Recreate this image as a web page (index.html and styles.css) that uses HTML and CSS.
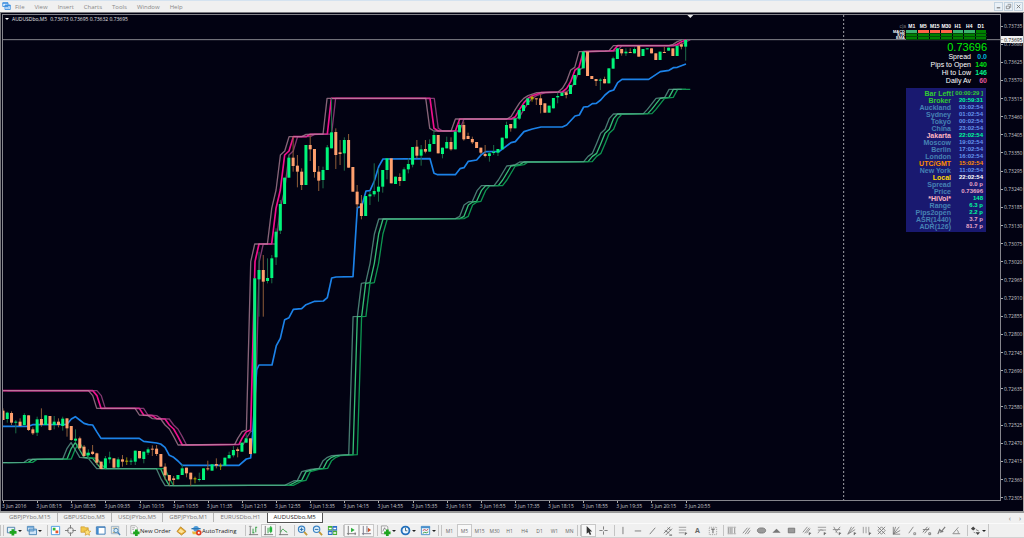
FILE: index.html
```html
<!DOCTYPE html>
<html lang="en">
<head>
<meta charset="utf-8">
<title>AUDUSDbo,M5</title>
<link rel="stylesheet" href="styles.css">
</head>
<body>
<svg class="symbols" aria-hidden="true">
  <symbol id="app" viewBox="0 0 12 12"><path d="M1 1h7v5H1zM4 4h7v6H4z" fill="#e8f4ff" stroke="#3c8fe0" stroke-width="1.2"/><path d="M4 4.7h7M1 1.5h7" stroke="#3c8fe0" stroke-width="1.6"/><path d="M5.5 8h4" stroke="#3c8fe0"/></symbol>
  <symbol id="newchart" viewBox="0 0 12 12"><path d="M1.500 2.500h8v6h-8z" fill="#e4f1fb" stroke="#4b7fa8"/><path d="M7.500 4.500v7M4 8h7.500" stroke="#1ea51e" stroke-width="3"/></symbol>
  <symbol id="profiles" viewBox="0 0 12 12"><path d="M1.500 1.500h7v5h-7zM3.500 4.500h8v6h-8z" fill="#cfe4f6" stroke="#4682b4"/><path d="M2 2.500h6M4 5.500h7" stroke="#5f9fd4"/></symbol>
  <symbol id="market" viewBox="0 0 12 12"><path d="M1.500 1.500h9v9h-9z" fill="#fff" stroke="#4a9be0"/><path d="M3 3h3v3H3z" fill="#38b538"/><path d="M6 6h3v3H6z" fill="#e4572e"/></symbol>
  <symbol id="target" viewBox="0 0 12 12"><circle cx="6" cy="6" r="3.200" fill="none" stroke="#777"/><path d="M6 0v4M6 8v4M0 6h4M8 6h4" stroke="#777"/></symbol>
  <symbol id="folder" viewBox="0 0 12 12"><path d="M1 2h4l1 1h3v5H1z" fill="#f2c84b" stroke="#c9962a" stroke-width=".7"/><path d="M8 4l1.200 2.500 2.600.3-2 1.800.6 2.600L8 10l-2.400 1.200.6-2.600-2-1.800 2.600-.3z" fill="#ffe27a" stroke="#c9962a" stroke-width=".7"/></symbol>
  <symbol id="navigator" viewBox="0 0 12 12"><path d="M1.500 2h9.500v8H1.500z" fill="#fff" stroke="#3676b5"/><path d="M2 2.500h9" stroke="#3676b5"/><path d="M2 3h2v7H2z" fill="#3f8bd0"/></symbol>
  <symbol id="tester" viewBox="0 0 12 12"><path d="M1.500 1.500h8v8h-8z" fill="#e9f0f6" stroke="#9ab0c2"/><path d="M3 3.500h5M3 8h3" stroke="#b79a55"/><circle cx="6.500" cy="6" r="2.300" fill="#d5ecfb" stroke="#4b87ba"/><path d="M8.300 8l2.700 3" stroke="#4b87ba" stroke-width="1.500"/></symbol>
  <symbol id="order" viewBox="0 0 12 12"><path d="M2 .8h5l2 2v6.700H2z" fill="#fafafa" stroke="#999" stroke-width=".8"/><path d="M3.500 3h3M3.500 5h2" stroke="#888" stroke-width=".7"/><path d="M8 5v7M4.500 8.500h7" stroke="#1ea51e" stroke-width="3"/></symbol>
  <symbol id="editor" viewBox="0 0 12 12"><path d="M1 7l4-5 6 5-5 4z" fill="#e5ad35" stroke="#b57b1c" stroke-width=".8"/><path d="M2.500 7L5 4l4 3-3 2z" fill="#ffe39a"/></symbol>
  <symbol id="auto" viewBox="0 0 12 12"><path d="M1 7h8l1 3H2z" fill="#e8b93e"/><circle cx="5.500" cy="4" r="3" fill="#4c9bd9"/><path d="M.5 4h10" stroke="#2c77b4" stroke-width="1.500"/><circle cx="8.500" cy="8.500" r="3" fill="#e03c22"/><path d="M7.500 7.500h2v2h-2z" fill="#fff"/></symbol>
  <symbol id="bars" viewBox="0 0 12 12"><path d="M2.500 1v10M1 10.500h10" stroke="#777"/><path d="M1 1.500h3" stroke="#999"/><path d="M5.500 4v5M8.500 2v6M5 8.500h2M8.500 2.500H10" stroke="#2c9c3c"/></symbol>
  <symbol id="candles" viewBox="0 0 12 12"><path d="M2.500 1v10M1 10.500h10" stroke="#777"/><path d="M5.500 3v6M8.500 1v8" stroke="#2c9c3c"/><path d="M7 2.500h3v5H7z" fill="#22b53a"/></symbol>
  <symbol id="line" viewBox="0 0 12 12"><path d="M2.500 1v10M1 10.500h10" stroke="#777"/><path d="M3 8c1-4 3-4 4-2l3 2" fill="none" stroke="#2c9c3c"/></symbol>
  <symbol id="zoomin" viewBox="0 0 12 12"><circle cx="5" cy="4.700" r="3.500" fill="#dceffc" stroke="#3b83c4" stroke-width="1.200"/><path d="M5 2.800v4M3 4.800h4" stroke="#2468a6"/><path d="M7.800 7.500L11 11" stroke="#c59a39" stroke-width="2"/></symbol>
  <symbol id="zoomout" viewBox="0 0 12 12"><circle cx="5" cy="4.700" r="3.500" fill="#dceffc" stroke="#3b83c4" stroke-width="1.200"/><path d="M3 4.800h4" stroke="#2468a6"/><path d="M7.800 7.500L11 11" stroke="#c59a39" stroke-width="2"/></symbol>
  <symbol id="tile" viewBox="0 0 12 12"><path d="M1 1h5v5H1zM6 6h5v5H6z" fill="#45ad35"/><path d="M6 1h5v5H6zM1 6h5v5H1z" fill="#2d6fc9"/><path d="M2 3h3v1.500H2zM7 3h3v1.500H7zM2 8h3v1.500H2zM7 8h3v1.500H7z" fill="#fff"/></symbol>
  <symbol id="scroll" viewBox="0 0 12 12"><path d="M2.500 1v10M1 9.500h10M10 8v3" stroke="#777"/><path d="M5.500 3v5l4-2.500z" fill="#28ad38"/></symbol>
  <symbol id="shift" viewBox="0 0 12 12"><path d="M2.500 1v10M1 9.500h10M6.500 1v7" stroke="#778"/><path d="M7.500 3v5l3.500-2.500z" fill="#c7502b"/></symbol>
  <symbol id="indicators" viewBox="0 0 12 12"><path d="M1.500 1h6l1 1v7.500h-7z" fill="#f6f6f6" stroke="#888" stroke-width=".8"/><path d="M3 7l2-4 1 2" fill="none" stroke="#666" stroke-width=".8"/><path d="M8 5v7M4.500 8.500h7" stroke="#1ea51e" stroke-width="3"/></symbol>
  <symbol id="clock" viewBox="0 0 12 12"><circle cx="6" cy="6" r="4.300" fill="#eef7ff" stroke="#2471bd" stroke-width="2"/><path d="M6 3v3.300h2" fill="none" stroke="#356" stroke-width=".9"/></symbol>
  <symbol id="template" viewBox="0 0 12 12"><path d="M1.500 1.500h9v9h-9z" fill="#edf6ff" stroke="#4a8fcb"/><path d="M1 2.500h10" stroke="#4a8fcb" stroke-width="2"/><path d="M3 6l2-1 2 1 2-1.500" fill="none" stroke="#b44"/><path d="M3 9l2-1 2 .500 2-1" fill="none" stroke="#393"/></symbol>
  <symbol id="cursor" viewBox="0 0 12 12"><path d="M4 1v8.500l2-1.700 1.500 3 1.500-.8L7.500 7H10z" fill="#333"/></symbol>
  <symbol id="cross" viewBox="0 0 12 12"><path d="M6 1.500v3.500M6 7v3.500M1.500 6H5M7 6h3.500" stroke="#777"/></symbol>
  <symbol id="vline" viewBox="0 0 12 12"><path d="M6.500 2v8" stroke="#777"/></symbol>
  <symbol id="hline" viewBox="0 0 12 12"><path d="M3 6.500h7" stroke="#777"/></symbol>
  <symbol id="trend" viewBox="0 0 12 12"><path d="M3 10l6-7" stroke="#777"/></symbol>
  <symbol id="channel" viewBox="0 0 12 12"><path d="M2 9l7-7M4 11l7-7M3 6l5 3M6 3l4 3" stroke="#777"/><path d="M8 11h3" stroke="#444"/></symbol>
  <symbol id="fibo" viewBox="0 0 12 12"><path d="M2 2.500h8M2 5.500h8M2 8.500h6" stroke="#999"/><path d="M9 8v3M9 9h2" stroke="#555"/></symbol>
  <symbol id="label" viewBox="0 0 12 12"><path d="M2.500 2.500h8v8h-8z" fill="none" stroke="#999" stroke-dasharray="1 1"/><path d="M4.500 4.500h4M6.500 4.500V9" stroke="#555"/></symbol>
  <symbol id="cycle" viewBox="0 0 12 12"><path d="M2.500 2v8M4.500 2v8M6.500 2v8M9.500 2v8" stroke="#888"/><path d="M2 2.500h9M2 9.500h9" stroke="#bbb"/></symbol>
  <symbol id="hatch" viewBox="0 0 12 12"><path d="M2 9l5-6M4.500 10l5-7M7 10l3-4" stroke="#888"/></symbol>
  <symbol id="ellipse" viewBox="0 0 12 12"><ellipse cx="6" cy="6" rx="4.500" ry="2.800" fill="#999" stroke="#777"/></symbol>
  <symbol id="triangle" viewBox="0 0 12 12"><path d="M1.500 8.500L6 4l4.500 4.500z" fill="#777"/></symbol>
  <symbol id="rect" viewBox="0 0 12 12"><path d="M2.500 3.500h7v5h-7z" fill="#999" stroke="#777"/></symbol>
  <symbol id="hatch2" viewBox="0 0 12 12"><path d="M2 8l5-6M4 9l5-6M6 9l4-5" stroke="#888"/><path d="M9 8v3M9 9h2" stroke="#555"/></symbol>
  <symbol id="range" viewBox="0 0 12 12"><path d="M2 2.500h9M2 5.500h9M2 9l3-4 3 1" fill="none" stroke="#999"/><path d="M9 8v3M9 9h2" stroke="#555"/></symbol>
  <symbol id="fork" viewBox="0 0 12 12"><path d="M2 5h8M3 2l4 7M10 2L5 8" stroke="#888"/><path d="M9 8v3M9 9h2" stroke="#555"/></symbol>
  <symbol id="fan" viewBox="0 0 12 12"><path d="M2 10l7-8M2 10l8-5M2 10l4-8" stroke="#888"/><path d="M9 8v3M9 9h2" stroke="#555"/></symbol>
  <symbol id="zones" viewBox="0 0 12 12"><path d="M2.500 2v7M5.500 2v7M8.500 2v6" stroke="#999"/><path d="M9 8v3M9 9h2" stroke="#555"/></symbol>
  <symbol id="grid" viewBox="0 0 12 12"><path d="M2 2l8 8M2 6l4 4M6 2l4 4M10 2l-8 8M6 2L2 6M10 6l-4 4" fill="none" stroke="#777" stroke-width=".9"/></symbol>
  <symbol id="rays" viewBox="0 0 12 12"><path d="M2.500 2v8H10M2.500 10L5 2M2.500 10L9 2M2.500 10L10 6" fill="none" stroke="#777" stroke-width=".9"/></symbol>
  <symbol id="stroke" viewBox="0 0 12 12"><path d="M3 9l5-7M8.500 8.500h2v2h-2z" fill="none" stroke="#888"/></symbol>
  <symbol id="multi" viewBox="0 0 12 12"><path d="M2 8l5-6M4 9l5-6M2 5h7M8.500 8.500h2v2h-2z" fill="none" stroke="#777"/></symbol>
  <symbol id="wave" viewBox="0 0 12 12"><path d="M2 10l2-5 2 2 4-5M4 8l4-1" fill="none" stroke="#777" stroke-width="1.200"/></symbol>
  <symbol id="angle" viewBox="0 0 12 12"><path d="M2 9.500l6-7M2 9.500h8M6 5c2 1 2 3 2 4" fill="none" stroke="#888"/></symbol>
  <symbol id="arrows" viewBox="0 0 12 12"><path d="M1 4l2.500-2.500L6 4 3.500 6zM6 8h5l-2.500 3z" fill="#444"/><path d="M4 7.500l1.500 1.500M6.500 5l3 1.500" stroke="#777"/></symbol>
</svg>

<header class="menubar">
  <svg class="app-icon"><use href="#app"/></svg>
  <nav class="menus">
    <button>File</button><button>View</button><button>Insert</button><button>Charts</button><button>Tools</button><button>Window</button><button>Help</button>
  </nav>
  <div class="window-buttons">
    <button aria-label="Minimize"><svg viewBox="0 0 8 8"><path d="M2 5.500h4" stroke="#555"/></svg></button>
    <button aria-label="Restore"><svg viewBox="0 0 8 8"><path d="M3 1.500h3.500V5H5M1.500 3.500H5v3H1.500z" fill="none" stroke="#777" stroke-width=".8"/></svg></button>
    <button aria-label="Close"><svg viewBox="0 0 8 8"><path d="M2 2l4 4M6 2L2 6" stroke="#777"/></svg></button>
  </div>
</header>

<main class="chart">
  <section class="plot">
    <svg class="series" id="series" viewBox="9 45 2991 1455" preserveAspectRatio="none" role="img" aria-label="AUDUSD five minute candles"></svg>
    <h1 class="chart-title"><span class="caret"></span><span>AUDUSDbo,M5</span><span>0.73673 0.73695 0.73632 0.73695</span></h1>
    <aside class="panel">
      <table class="signals">
        <tr class="heads"><th class="dim">c|a</th><th>M1</th><th>M5</th><th>M15</th><th>M30</th><th>H1</th><th>H4</th><th>D1</th></tr>
        <tr><th>MACD</th><td class="sea"></td><td class="red"></td><td class="red"></td><td class="red"></td><td class="sea"></td><td class="sea"></td><td></td></tr>
        <tr><th>STR</th><td></td><td></td><td></td><td></td><td></td><td></td><td></td></tr>
        <tr><th>EMA</th><td></td><td></td><td></td><td></td><td></td><td></td><td></td></tr>
      </table>
      <div class="bid">0.73696</div>
      <table class="stats">
        <tr><th>Spread</th><td class="aqua">0.0</td></tr>
        <tr><th>Pips to Open</th><td class="lime">140</td></tr>
        <tr><th>Hi to Low</th><td class="spring">146</td></tr>
        <tr><th>Daily Av</th><td class="rose">60</td></tr>
      </table>
      <table class="clocks">
        <tr class="limegreen"><th>Bar Left</th><td>[ 00:00:29 ]</td></tr>
        <tr class="broker"><th>Broker</th><td>20:59:31</td></tr>
        <tr><th>Auckland</th><td>03:02:54</td></tr>
        <tr><th>Sydney</th><td>01:02:54</td></tr>
        <tr><th>Tokyo</th><td>00:02:54</td></tr>
        <tr><th>China</th><td>23:02:54</td></tr>
        <tr class="jakarta"><th>Jakarta</th><td>22:02:54</td></tr>
        <tr><th>Moscow</th><td>19:02:54</td></tr>
        <tr><th>Berlin</th><td>17:02:54</td></tr>
        <tr><th>London</th><td>16:02:54</td></tr>
        <tr class="utc"><th>UTC/GMT</th><td>15:02:54</td></tr>
        <tr><th>New York</th><td>11:02:54</td></tr>
        <tr class="local"><th>Local</th><td>22:02:54</td></tr>
        <tr class="pink"><th>Spread</th><td>0.0 p</td></tr>
        <tr class="pink"><th>Price</th><td>0.73696</td></tr>
        <tr class="jakarta"><th>*HiVol*</th><td>148</td></tr>
        <tr class="mint"><th>Range</th><td>6.3 p</td></tr>
        <tr class="mint"><th>Pips2open</th><td>2.2 p</td></tr>
        <tr class="pink"><th>ASR(1440)</th><td>3.7 p</td></tr>
        <tr class="pink"><th>ADR(126)</th><td>81.7 p</td></tr>
      </table>
    </aside>
  </section>
  <div class="price-axis" id="prices"><span class="current">0.73695</span></div>
  <div class="time-axis" id="times"></div>
</main>

<nav class="tabs">
  <button>GBPJPYbo,M15</button><button>GBPUSDbo,M5</button><button>USDJPYbo,M5</button><button>GBPJPYbo,M1</button><button>EURUSDbo,H1</button><button class="active">AUDUSDbo,M5</button>
  <span class="tab-scroll"><button aria-label="Scroll left">‹</button><button aria-label="Scroll right">›</button></span>
</nav>

<footer class="toolbar">
  <i class="grip"></i>
  <button class="drop" aria-label="New chart"><svg><use href="#newchart"/></svg></button>
  <button class="drop" aria-label="Profiles"><svg><use href="#profiles"/></svg></button>
  <i class="sep"></i>
  <button aria-label="Market watch"><svg><use href="#market"/></svg></button>
  <button aria-label="Data window"><svg><use href="#target"/></svg></button>
  <button aria-label="Favorites"><svg><use href="#folder"/></svg></button>
  <button aria-label="Navigator"><svg><use href="#navigator"/></svg></button>
  <button aria-label="Strategy tester"><svg><use href="#tester"/></svg></button>
  <i class="sep"></i>
  <button class="wide order"><svg><use href="#order"/></svg>New Order</button>
  <button aria-label="MetaEditor"><svg><use href="#editor"/></svg></button>
  <button class="wide auto"><svg><use href="#auto"/></svg>AutoTrading</button>
  <i class="sep"></i>
  <button aria-label="Bar chart"><svg><use href="#bars"/></svg></button>
  <button class="on" aria-label="Candlesticks"><svg><use href="#candles"/></svg></button>
  <button aria-label="Line chart"><svg><use href="#line"/></svg></button>
  <i class="sep"></i>
  <button aria-label="Zoom in"><svg><use href="#zoomin"/></svg></button>
  <button aria-label="Zoom out"><svg><use href="#zoomout"/></svg></button>
  <button aria-label="Tile windows"><svg><use href="#tile"/></svg></button>
  <i class="sep"></i>
  <button class="on" aria-label="Auto scroll"><svg><use href="#scroll"/></svg></button>
  <button class="on" aria-label="Chart shift"><svg><use href="#shift"/></svg></button>
  <i class="sep"></i>
  <button class="drop" aria-label="Indicators"><svg><use href="#indicators"/></svg></button>
  <button class="drop" aria-label="Periods"><svg><use href="#clock"/></svg></button>
  <button class="drop" aria-label="Templates"><svg><use href="#template"/></svg></button>
  <i class="grip"></i>
  <button>M1</button><button class="on">M5</button><button>M15</button><button>M30</button><button>H1</button><button>H4</button><button>D1</button><button>W1</button><button>MN</button>
  <i class="grip"></i>
  <button class="on" aria-label="Cursor"><svg><use href="#cursor"/></svg></button>
  <button aria-label="Crosshair"><svg><use href="#cross"/></svg></button>
  <i class="sep"></i>
  <button aria-label="Vertical line"><svg><use href="#vline"/></svg></button>
  <button aria-label="Horizontal line"><svg><use href="#hline"/></svg></button>
  <button aria-label="Trendline"><svg><use href="#trend"/></svg></button>
  <button aria-label="Channel"><svg><use href="#channel"/></svg></button>
  <button aria-label="Fibonacci"><svg><use href="#fibo"/></svg></button>
  <button class="letter">A</button>
  <button aria-label="Text label"><svg><use href="#label"/></svg></button>
  <i class="sep"></i>
  <button aria-label="Cycle lines"><svg><use href="#cycle"/></svg></button>
  <button aria-label="Parallel lines"><svg><use href="#hatch"/></svg></button>
  <button aria-label="Ellipse"><svg><use href="#ellipse"/></svg></button>
  <button aria-label="Triangle"><svg><use href="#triangle"/></svg></button>
  <button aria-label="Rectangle"><svg><use href="#rect"/></svg></button>
  <button aria-label="Fibonacci channel"><svg><use href="#hatch2"/></svg></button>
  <button aria-label="Expansion"><svg><use href="#range"/></svg></button>
  <button aria-label="Pitchfork"><svg><use href="#fork"/></svg></button>
  <button aria-label="Fibonacci fan"><svg><use href="#fan"/></svg></button>
  <button aria-label="Time zones"><svg><use href="#zones"/></svg></button>
  <button aria-label="Gann grid"><svg><use href="#grid"/></svg></button>
  <button aria-label="Gann fan"><svg><use href="#rays"/></svg></button>
  <button aria-label="Gann line"><svg><use href="#stroke"/></svg></button>
  <button aria-label="Regression channel"><svg><use href="#multi"/></svg></button>
  <button aria-label="Waves"><svg><use href="#wave"/></svg></button>
  <button aria-label="Trend by angle"><svg><use href="#angle"/></svg></button>
  <i class="sep"></i>
  <button class="drop" aria-label="Arrows"><svg><use href="#arrows"/></svg></button>
  <i class="end"></i>
</footer>
<script src="chart.js"></script>
</body>
</html>
```

FILE: styles.css
```css
* { box-sizing: border-box; }
body {
  margin: 0;
  height: 100vh;
  display: flex;
  flex-direction: column;
  background: #f0f0f0;
  color: #777;
  font-family: "Open Sans", "Noto Sans", sans-serif;
  font-size: 6px;
  overflow: hidden;
}
button {
  margin: 0;
  padding: 0;
  border: 0;
  background: none;
  color: inherit;
  font: inherit;
  white-space: nowrap;
}
table { border-collapse: collapse; }
th, td { padding: 0; }
.symbols { display: none; }

.menubar {
  flex: none;
  height: 13px;
  display: flex;
  align-items: center;
  padding: 0 1px 0 2px;
  border-top: 1px solid #d5e3f0;
  border-bottom: 1px solid #77777c;
}
.app-icon { width: 9px; height: 9px; }
.menus { flex: 1; display: flex; gap: 10px; padding-left: 4px; font-size: 6px; line-height: 10px; color: #888; }
.window-buttons { display: flex; gap: 1px; }
.window-buttons button { width: 9px; height: 9px; border: 1px solid #c3d3e0; background: #eaf1f7; display: flex; }
.window-buttons svg { width: 100%; height: 100%; }

.chart {
  flex: 1;
  min-height: 0;
  display: grid;
  grid-template-columns: 1fr 22px;
  grid-template-rows: 1fr 10px;
  padding: 1px 0 0 1px;
  background: #020212;
  border-left: 1px solid #77777c;
  border-right: 1px solid #aaa;
  color: #c8c8cc;
  font-size: 5px;
}
.plot { position: relative; min-height: 0; border: 1px solid #85858c; display: flex; justify-content: space-between; }
.series { position: absolute; left: 0; top: 0; width: 100%; height: 100%; }
.chart-title { position: relative; margin: 0; padding: 0 2px; display: flex; gap: 3px; height: 8px; align-items: center; font-size: 5px; font-weight: 400; color: #e4e4e8; }
.caret { border: 2px solid transparent; border-top-color: #fff; border-bottom: 0; }

.panel { position: relative; padding: 8px 13px 0 0; display: flex; flex-direction: column; align-items: flex-end; font-family: "Liberation Sans", Arial, sans-serif; }
.signals { table-layout: fixed; width: 95px; line-height: 3px; color: #fff; }
.signals th { font-size: 4px; text-align: right; height: 3px; padding-right: 1px; }
.signals .heads th { height: 7px; font-size: 5px; text-align: center; padding: 0; }
.signals .heads .dim { color: #777; font-weight: 400; text-align: right; }
.signals th:first-child { width: 14px; }
.signals td { height: 3px; background: #008000; border-right: 1px solid #020212; border-bottom: 1px solid #024a08; }
.signals td.sea { background: #3cb371; }
.signals td.red { background: #ff6347; }
.bid { font-size: 11px; line-height: 12px; color: #00f000; padding-top: 1px; }
.stats { font-size: 7px; line-height: 8px; color: #fff; text-align: right; }
.stats th { font-weight: 400; }
.stats td { width: 16px; font-weight: 700; }
.aqua { color: #00b4dc; }
.lime { color: #00e010; }
.spring { color: #00f08a; }
.rose { color: #e0589c; }
.clocks { margin: 3px 1px 0 0; width: 80px; border: 2px solid #191970; border-width: 2px 0; background: #191970; font-size: 7px; line-height: 7px; font-weight: 700; text-align: right; color: #4682b4; }
.clocks th { width: 45px; height: 7px; }
.clocks td { padding-right: 3px; font-size: 6px; color: #6495ed; white-space: nowrap; }
.clocks .limegreen, .clocks .limegreen td, .clocks .broker { color: #32cd32; }
.clocks .broker td, .clocks .jakarta td, .clocks .mint td { color: #00fa9a; }
.clocks .jakarta { color: #ffb6c1; }
.clocks .utc, .clocks .utc td { color: #ff8c00; }
.clocks .local { color: #ffd700; }
.clocks .local td { color: #fff; }
.clocks .pink td { color: #e8a5c4; }

.price-axis { position: relative; grid-row: span 2; display: flex; flex-direction: column; justify-content: space-between; padding: 9px 0 10px; line-height: 6px; }
.price-axis span { display: flex; align-items: center; }
.price-axis span::before { content: ""; width: 2px; height: 1px; margin-right: 1px; background: #aaa; }
.price-axis .current { position: absolute; left: 0; right: 0; top: 22px; height: 7px; z-index: 1; background: #f0f0f0; color: #111; }
.time-axis { display: grid; grid-template-columns: repeat(21, 100fr) 827fr; line-height: 6px; }
.time-axis span { min-width: 0; white-space: nowrap; }
.time-axis span::before { content: ""; display: block; width: 1px; height: 2px; margin-left: 1px; background: #aaa; }

.tabs { flex: none; height: 12px; display: flex; padding: 0 3px; border-top: 2px solid #9a9a9a; line-height: 9px; }
.tabs > button { padding: 0 6px; border-right: 1px solid #b5b5b5; height: 9px; }
.tabs > button:nth-child(5) { border-right: 0; }
.tabs .active { background: #fff; border: 1px solid #555; border-top: 0; color: #222; height: 10px; }
.tab-scroll { margin-left: auto; display: flex; gap: 8px; font-size: 7px; }

.toolbar { flex: none; height: 15px; display: flex; align-items: center; border-top: 1px solid #fafafa; border-bottom: 1px solid #d2d2d2; color: #666; font-size: 5px; }
.toolbar button { flex: none; width: 15px; height: 13px; display: flex; align-items: center; justify-content: center; }
.toolbar svg { flex: none; width: 11px; height: 11px; }
.toolbar .on { background: #f8f8f8; border: 1px solid #c8c8c8; }
.toolbar .drop { width: 20px; justify-content: flex-start; padding-left: 2px; gap: 1px; }
.toolbar .drop::after { content: ""; border: 2px solid transparent; border-top-color: #222; border-bottom: 0; }
.toolbar .wide { justify-content: flex-start; padding-left: 2px; font-size: 6px; color: #222; }
.toolbar .order { width: 47px; }
.toolbar .auto { width: 53px; }
.toolbar .letter { font-size: 7px; font-weight: 700; }
.grip, .sep { flex: none; width: 4px; height: 11px; border-right: 1px solid #c4c4c4; }
.grip { border-left: 1px solid #c4c4c4; }
.end { height: 13px; border-right: 1px solid #c4c4c4; }
```

FILE: chart.js
```js
// Chart units: three per nominal pixel. One candle every STEP units.
const STEP = 12.8;
const FIRST = 9;

// Each block: vertical base, then candles as "kind top bottom [high low]".
// u = rising, d = falling, y = unchanged.
const blocks = [
  [1110, `d 122 150 115 150|u 128 147 125 158|d 129 158 124 165|u 155 158 150 190|d 155 168 145 168|u 135 165 130 168|d 136 180 136 183|d 178 190 172 195|u 148 188 140 198|d 147 165 115 170|u 136 165|d 138 180 138 182|u 155 165 138 178|d 155 165 145 172|u 146 168 140 182|d 145 175 145 200|d 168 210 168 212|u 206 212 178 218|d 205 235 200 240|d 230 258 225 262|u 248 256 238 268|d 245 252 225 255|d 250 278 248 285|d 275 297|u 265 295 258 296|u 262 268 245 280|d 265 293|u 268 292 262 294|d 268 275 255 290|y 272 275 262 285|u 272 275 265 285|u 242 275 242 285|d 243 265|u 245 267 245 280|u 238 248 232 255|d 236 239 226 258|d 236 252 225 258|d 252 290|d 290 316 280 330|d 315 332 315 347|d 325 330 318 345|u 315 328|u 295 315 283 315|d 293 310 293 322|d 308 328 308 348|y 325 328 320 340|u 327 330 308 335|u 295 330|d 295 298 272 302|u 283 302|d 282 287 265 295|y 286 289 280 300|u 263 287|u 255 265 245 265|u 240 256 228 262|d 238 243 232 262`],
  [660, `u 668 695|u 655 668 640 668|d 655 702|u 175 700|u 150 178 95 290|d 150 185 105 290|u 174 183 115 190|u 115 174 105 190|u 35 112 25 135`],
  [240, `u 372 452 360 462|u 293 372|u 233 293 225 293|d 233 258 170 275|d 257 275 225 322|d 275 315 265 330|u 195 315|d 195 208 165 243|d 207 276 207 293|d 275 302 258 333|u 270 300 260 325|u 202 270 195 270|u 157 205 55 205|d 156 225 145 267|d 217 222 180 255|u 180 220 172 272|d 180 263 162 263|d 261 335|d 335 373 315 385|d 370 408 345 418|u 348 408|u 343 349 335 375|u 333 343 250 350|u 320 335 265 365|u 270 320 270 338|u 235 270 235 298|d 235 310|u 290 312|d 291 303 280 318|u 268 303 262 303|u 252 268 235 280|u 201 254 201 262|d 200 227 180 235|u 208 227 195 257|d 207 215 180 220|u 192 215 178 215|u 165 192 150 192|d 165 220|u 203 222 203 235|u 186 205 170 205|d 186 208 172 212|u 155 208|u 135 157 125 157|d 135 178 125 182`],
  [180, `d 228 237 218 237|d 237 247 230 252|d 246 264|d 263 278 263 282|d 282 288 255 292|u 280 288 275 305|u 275 279 255 285|u 267 278 267 288|u 233 268|u 195 235 185 235|d 192 205 192 215|u 175 205|u 150 176 150 180|u 135 153|u 115 135|y 110 118 107 125|d 115 118 115 135|d 115 135 102 160|d 130 158|u 137 158|u 114 145|u 108 112 98 130`],
  [30, `u 248 258|d 247 255 242 265|u 225 252|u 195 225|u 175 195|u 125 175|d 125 198|d 198 207|d 207 213 207 228|u 209 212 205 240|d 207 220 200 220|u 175 220|u 145 176 140 176|u 115 147|d 117 130 117 137|u 125 130 115 138|d 126 129 115 129|u 117 130 112 130|d 108 140|u 117 138|u 115 118|d 115 130|d 130 150|u 125 150|d 126 129 110 129|u 113 122|d 115 138|u 108 138|d 103 110 97 118|u 90 110 90 152`]
];

const upper = "9,1172 278,1172 291,1187 303,1225 418,1225 431,1245 457,1247 470,1256 495,1257 508,1275 521,1287 534,1310 547,1335 717,1333 726,1315 739,1295 752,1290 765,785 777,732 815,732 828,625 841,570 854,465 867,453 880,410 918,410 931,403 982,402 994,295 1290,295 1302,385 1315,393 1366,393 1379,357 1533,357 1546,350 1559,328 1572,308 1584,295 1597,287 1623,278 1687,276 1700,265 1712,245 1725,210 1737,202 1750,155 1828,153 1840,152 1853,137 2020,137 2032,133 2045,125 2058,120";
const middle = "9,1279 85,1279 98,1274 201,1273 214,1257 226,1250 239,1260 252,1270 265,1274 278,1275 290,1295 303,1315 418,1315 431,1324 470,1329 482,1332 495,1342 508,1366 521,1372 534,1383 547,1396 717,1396 739,1377 752,1374 758,1300 770,1110 777,1095 816,1095 829,1037 841,1015 854,959 867,953 880,928 905,926 918,914 944,904 970,903 982,893 995,834 1008,831 1059,830 1072,623 1085,620 1098,573 1110,572 1123,543 1136,500 1149,477 1290,476 1302,520 1313,524 1366,524 1380,506 1392,503 1405,484 1430,480 1444,464 1457,455 1498,454 1533,428 1546,425 1572,395 1597,387 1623,381 1687,381 1700,375 1725,348 1738,345 1751,321 1764,320 1777,311 1789,310 1802,300 1815,285 1828,274 1841,270 1853,248 1866,238 1946,238 1981,215 2007,211 2020,203 2032,202 2058,192";
const lower = "9,1388 85,1387 98,1378 201,1377 214,1345 226,1328 239,1350 252,1372 278,1375 290,1390 303,1406 482,1406 495,1435 508,1457 867,1456 893,1443 905,1441 918,1415 944,1408 970,1405 982,1382 995,1372 1008,1367 1059,1364 1072,950 1085,949 1097,850 1110,848 1123,790 1136,702 1149,657 1379,656 1392,649 1405,615 1418,606 1430,604 1444,572 1457,557 1495,557 1508,540 1533,498 1559,494 1572,486 1764,485 1777,469 1790,460 1802,432 1815,400 1828,388 1841,355 1853,342 1943,341 1955,328 1981,295 2007,292 2020,268 2058,268";

const svg = document.getElementById("series");
const make = (name, attrs) => {
  const el = document.createElementNS("http://www.w3.org/2000/svg", name);
  for (const key in attrs) el.setAttribute(key, attrs[key]);
  svg.appendChild(el);
};
const curve = (points, shift, stroke, width) =>
  make("polyline", { points, fill: "none", stroke, "stroke-width": width, "stroke-linejoin": "round", transform: `translate(${shift} 0)` });

const body = { u: "#00f57a", d: "#ffa06e", y: "#b8b000" };
const wick = { u: "#1d6b48", d: "#8e5c38", y: "#8a8400" };

make("path", { d: "M9 119H3000", stroke: "#85858c", "stroke-width": 3 });
make("path", { d: "M2531 45V1500", stroke: "#a0a0a8", "stroke-width": 3, "stroke-dasharray": "6 6" });
make("path", { d: "M2062 45h18l-9 9z", fill: "#e8e8e8" });

curve(lower, 0, "#34bd74", 4);
curve(lower, STEP, "#0e9450", 4);
curve(lower, -STEP, "#62a894bb", 4);
curve(upper, 0, "#f0108e", 5);
curve(upper, STEP, "#b04c92bb", 4);
curve(upper, -STEP, "#b8889ebb", 4);
curve(middle, 0, "#1c82e8", 5);

let index = 0;
for (const [base, text] of blocks) {
  for (const item of text.split("|")) {
    const [kind, top, bottom, high = top, low = bottom] = item.split(" ");
    const x = FIRST + STEP * index++;
    make("rect", { x: x - 1.5, y: base + +high, width: 3, height: low - high, fill: wick[kind] });
    make("rect", { x: x - 4.5, y: base + +top, width: 9, height: Math.max(bottom - top, 3), fill: body[kind] });
  }
}

const prices = document.getElementById("prices");
for (let p = 73735; p >= 72305; p -= 55) {
  const label = document.createElement("span");
  label.textContent = "0." + p;
  prices.appendChild(label);
}

const times = document.getElementById("times");
for (let i = 0; i < 21; i++) {
  const minutes = 455 + i * 40;
  const clock = String(Math.floor(minutes / 60)).padStart(2, "0") + ":" + String(minutes % 60).padStart(2, "0");
  const label = document.createElement("span");
  label.textContent = "3 Jun " + (i ? clock : "2016");
  times.appendChild(label);
}
```
